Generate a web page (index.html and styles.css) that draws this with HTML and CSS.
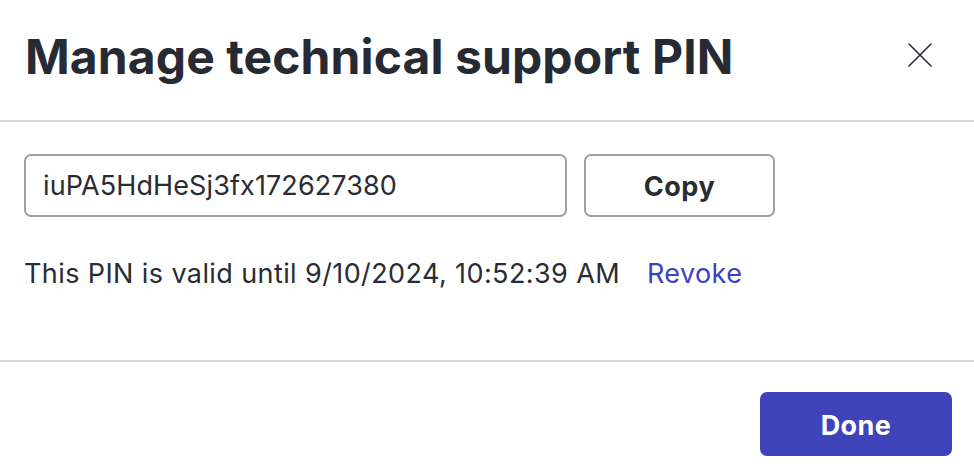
FILE: index.html
```html
<!DOCTYPE html>
<html lang="en">
<head>
<meta charset="utf-8">
<title>Manage technical support PIN</title>
<link rel="stylesheet" href="styles.css">
</head>
<body>
<div class="modal">
  <div class="modal-header">
    <h1 class="modal-title">Manage technical support PIN</h1>
    <button class="close-btn" aria-label="Close">
      <svg width="24" height="24" viewBox="0 0 24 24" fill="none" stroke="#2a2c33" stroke-width="1.6" stroke-linecap="round">
        <path d="M1 1 L23 23 M23 1 L1 23"/>
      </svg>
    </button>
  </div>
  <div class="modal-body">
    <div class="pin-row">
      <input class="pin-input" type="text" value="iuPA5HdHeSj3fx172627380" readonly>
      <button class="copy-btn">Copy</button>
    </div>
    <p class="status">This PIN is valid until 9/10/2024, 10:52:39 AM <a class="revoke" href="#">Revoke</a></p>
  </div>
  <div class="modal-footer">
    <button class="done-btn">Done</button>
  </div>
</div>
</body>
</html>
```
FILE: styles.css
```css
html, body {
  margin: 0;
  padding: 0;
  background: #ffffff;
}
body {
  font-family: Inter, "Noto Sans", sans-serif;
  color: #2a2c33;
}
.modal {
  width: 974px;
  height: 474px;
  display: flex;
  flex-direction: column;
}
.modal-header {
  height: 120px;
  display: flex;
  align-items: center;
  justify-content: space-between;
  padding: 0 42px 0 25px;
  border-bottom: 2px solid #d3d5da;
}
.modal-title {
  margin: 0;
  font-size: 48px;
  font-weight: 700;
  line-height: 56px;
  color: #272a32;
  letter-spacing: 0.1px;
  position: relative;
  top: -3px;
}
.close-btn {
  border: 0;
  background: none;
  padding: 0;
  width: 24px;
  height: 24px;
  display: flex;
  position: relative;
  top: -5px;
  cursor: pointer;
}
.modal-body {
  height: 238px;
  box-sizing: border-box;
  padding: 32px 24px 0 24px;
}
.pin-row {
  display: flex;
  gap: 17px;
}
.pin-input {
  width: 543px;
  height: 63px;
  box-sizing: border-box;
  border: 2px solid #9fa0a6;
  border-radius: 7px;
  padding: 0 17px;
  font-family: Inter, "Noto Sans", sans-serif;
  font-size: 27px;
  letter-spacing: 0.1px;
  color: #2a2c33;
  outline: none;
}
.copy-btn {
  width: 191px;
  height: 63px;
  box-sizing: border-box;
  border: 2px solid #9fa0a6;
  border-radius: 7px;
  background: #ffffff;
  font-family: Inter, "Noto Sans", sans-serif;
  font-size: 27px;
  letter-spacing: 0.5px;
  font-weight: 700;
  color: #2a2c33;
  padding: 2px 0 0 0;
}
.status {
  margin: 37px 0 0 0;
  font-size: 27px;
  letter-spacing: 0.4px;
  line-height: 40px;
  color: #2a2c33;
}
.revoke {
  color: #3b41c5;
  text-decoration: none;
  margin-left: 19px;
}
.modal-footer {
  flex: 1;
  border-top: 2px solid #d3d5da;
  display: flex;
  justify-content: flex-end;
  align-items: flex-start;
  padding: 30px 22px 0 0;
}
.done-btn {
  width: 192px;
  height: 64px;
  border: 0;
  border-radius: 7px;
  background: #3e43b9;
  color: #ffffff;
  font-family: Inter, "Noto Sans", sans-serif;
  font-size: 27px;
  letter-spacing: 0.4px;
  font-weight: 700;
  padding: 2px 0 0 0;
}
```
